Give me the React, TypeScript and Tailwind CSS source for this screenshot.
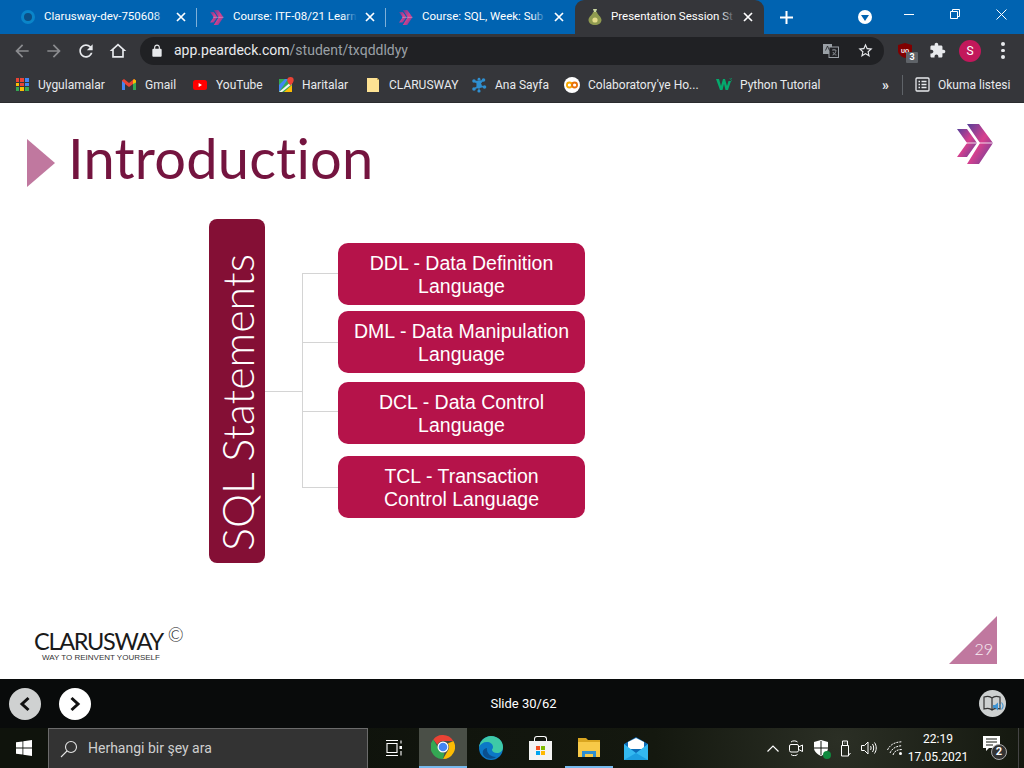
import type { ReactNode } from "react";

const ui = "font-['Roboto','Noto_Sans',sans-serif]";

function Chevrons({ size = 16 }: { size?: number }) {
  return (
    <svg width={size * 0.9} height={size} viewBox="0 0 36 40">
      <defs>
        <linearGradient id="chev" x1="0" y1="0" x2="1" y2="1">
          <stop offset="0" stopColor="#57409a" />
          <stop offset="0.5" stopColor="#d8408e" />
          <stop offset="1" stopColor="#57409a" />
        </linearGradient>
      </defs>
      <polygon points="0,5 10,5 20,19 10,33 0,33 10,19" fill="url(#chev)" />
      <polygon points="10,0 22,0 36,19 22,40 10,40 23,19" fill="url(#chev)" />
      <rect x="8" y="18.500" width="28" height="1" fill="#fff" opacity="0.8" />
    </svg>
  );
}

function Mat({ d, size = 20, className = "" }: { d: string; size?: number; className?: string }) {
  return (
    <svg width={size} height={size} viewBox="0 0 24 24" fill="currentColor" className={className}>
      <path d={d} />
    </svg>
  );
}

function CloseX() {
  return (
    <svg width="10" height="10" viewBox="0 0 10 10" stroke="#fff" strokeWidth="1.7" className="shrink-0">
      <path d="M1 1l8 8M9 1l-8 8" />
    </svg>
  );
}

function Tab({ icon, title, active, divider }: { icon: ReactNode; title: string; active?: boolean; divider?: boolean }) {
  return (
    <div className={`relative w-[189px] h-[34px] shrink-0 flex items-center pl-[12px] pr-[10px] ${active ? "bg-[#35363a] rounded-t-[9px]" : ""}`}>
      <div className="w-[16px] h-[16px] mr-[8px] flex items-center justify-center shrink-0">{icon}</div>
      <div className="relative flex-1 overflow-hidden whitespace-nowrap text-[11.500px] text-white">
        {title}
        <div className={`absolute right-0 top-0 bottom-0 w-[14px] bg-linear-to-r from-transparent ${active ? "to-[#35363a]" : "to-[#0063b1]"}`} />
      </div>
      <div className="w-[12px] ml-[7px] flex justify-center"><CloseX /></div>
      {divider && <div className="absolute right-0 top-[8px] h-[19px] w-px bg-[#7fb0d8]" />}
    </div>
  );
}

function Bookmark({ icon, label, width }: { icon: ReactNode; label: string; width: number }) {
  return (
    <div className="flex items-center shrink-0" style={{ width }}>
      <div className="w-[16px] h-[16px] flex items-center justify-center mr-[8px] shrink-0">{icon}</div>
      <span className="text-[12px] text-[#e8eaed] whitespace-nowrap">{label}</span>
    </div>
  );
}

function AppsIcon() {
  const colors = ["#ea4335", "#ea4335", "#4285f4", "#fbbc04", "#ea4335", "#4285f4", "#34a853", "#fbbc04", "#34a853"];
  return (
    <div className="grid grid-cols-3 gap-[1px] w-[13px] h-[13px]">
      {colors.map((c, i) => <div key={i} style={{ backgroundColor: c }} />)}
    </div>
  );
}

function GmailIcon() {
  return (
    <svg width="14" height="11" viewBox="0 0 14 11">
      <path d="M0 1.500V11h3V5l4 3 4-3v6h3V1.500L12 0 7 4 2 0z" fill="#ea4335" />
      <path d="M0 2v9h3V4.500z" fill="#4285f4" />
      <path d="M14 2v9h-3V4.500z" fill="#34a853" />
      <path d="M11 1.500L12 0l2 1.500v2L11 5z" fill="#fbbc04" />
    </svg>
  );
}

function YoutubeIcon() {
  return (
    <svg width="14" height="10" viewBox="0 0 14 10">
      <rect width="14" height="10" rx="2.500" fill="#f00" />
      <path d="M5.600 3v4l3.400-2z" fill="#fff" />
    </svg>
  );
}

function MapsIcon() {
  return (
    <svg width="15" height="15" viewBox="0 0 15 15">
      <rect y="2" width="13" height="13" fill="#34a853" />
      <path d="M0 15V8l6-6h3z" fill="#4285f4" />
      <path d="M0 15L13 4v3L3 15z" fill="#f1f3f4" />
      <path d="M5 15l8-7v7z" fill="#fbbc04" />
      <path d="M0 2h5L0 7z" fill="#34a853" />
      <path d="M11.500 0a3.200 3.200 0 00-3.200 3.200c0 2.200 3.200 5.300 3.200 5.300s3.200-3.100 3.200-5.300A3.200 3.200 0 0011.500 0z" fill="#ea4335" />
    </svg>
  );
}

function AnaSayfaIcon() {
  return (
    <svg width="16" height="16" viewBox="0 0 16 16" fill="#2f8fd0">
      <circle cx="8" cy="8" r="2.600" />
      <circle cx="3" cy="4" r="1.800" /><circle cx="12.500" cy="3" r="1.800" /><circle cx="13.500" cy="10" r="1.800" />
      <circle cx="3" cy="12" r="1.800" /><circle cx="8" cy="14" r="1.600" /><circle cx="8" cy="2.200" r="1.400" />
      <path d="M3 4l5 4 4.500-5M3 12l5-4 5.500 2M8 8v6" stroke="#2f8fd0" strokeWidth="1" />
    </svg>
  );
}

function ColabIcon() {
  return (
    <svg width="16" height="16" viewBox="0 0 16 16">
      <circle cx="8" cy="8" r="8" fill="#fff" />
      <circle cx="5.400" cy="8" r="2.500" fill="none" stroke="#f9ab00" strokeWidth="1.800" />
      <circle cx="10.600" cy="8" r="2.500" fill="none" stroke="#e8710a" strokeWidth="1.800" />
    </svg>
  );
}

function W3Icon() {
  return (
    <svg width="16" height="13" viewBox="0 0 16 13">
      <path d="M0 1h3l2 7 2-7h2l2 7 1.500-5h2.500l-3 9h-2.500L8 6l-1.500 6H4z" fill="#04aa6d" />
      <path d="M13 0h2.500v.5L14.500 1.500c.7 0 1 .4 1 1s-.5 1-1.200 1H13" stroke="#04aa6d" strokeWidth="0.600" fill="none" />
    </svg>
  );
}

function PearIcon() {
  return (
    <svg width="14" height="16" viewBox="0 0 14 16">
      <path d="M5 0h4l-1 3h-2z" fill="#c9d6a0" />
      <path d="M5 3h4c0 2.500 4.500 4.500 4.500 8 0 3-3 5-6.500 5S.5 14 .5 11c0-3.500 4.500-5.500 4.500-8z" fill="#8f9a50" />
      <circle cx="7" cy="11" r="2.600" fill="#e4dc8a" />
    </svg>
  );
}

function FolderBookmark() {
  return (
    <svg width="12" height="14" viewBox="0 0 12 14">
      <path d="M0 0h10l2 2v12H0z" fill="#fde293" />
      <path d="M10 0v2h2" fill="#c9a94f" />
    </svg>
  );
}

function BrowserChrome() {
  return (
    <div className={`${ui} shrink-0`}>
      <div className="h-[34px] bg-[#0063b1] flex items-center">
        <div className="w-[8px] shrink-0" />
        <Tab divider title="Clarusway-dev-750608" icon={
          <div className="w-[14px] h-[14px] rounded-full border-[3px] border-[#0a85c9] bg-[#0b4f86]" />
        } />
        <Tab divider title="Course: ITF-08/21 Learn" icon={<Chevrons size={15} />} />
        <Tab title="Course: SQL, Week: Sub" icon={<Chevrons size={15} />} />
        <Tab active title="Presentation Session St" icon={<PearIcon />} />
        <div className="w-[44px] flex justify-center">
          <svg width="13" height="13" viewBox="0 0 13 13" stroke="#fff" strokeWidth="2"><path d="M6.500 0v13M0 6.500h13" /></svg>
        </div>
        <div className="flex-1 flex items-center pl-[50px] self-stretch">
          <div className="w-[14px] h-[14px] rounded-full bg-white flex items-center justify-center">
            <div className="w-0 h-0 border-x-[4px] border-x-transparent border-t-[6px] border-t-[#0063b1] mt-[1px]" />
          </div>
          <div className="ml-[32px] w-[10px] h-px bg-white -mt-[6px]" />
          <svg width="10" height="10" viewBox="0 0 10 10" fill="none" stroke="#fff" className="ml-[36px] -mt-[6px]">
            <path d="M.5 2.500h7v7h-7zM2.500 2.500v-2h7v7h-2" />
          </svg>
          <svg width="11" height="11" viewBox="0 0 11 11" stroke="#fff" className="ml-[36px] -mt-[6px]">
            <path d="M.5.5l10 10M10.500.5l-10 10" />
          </svg>
        </div>
      </div>

      <div className="h-[33px] bg-[#35363a] flex items-center pl-[12px] pr-[12px]">
        <Mat size={20} className="text-[#8b8c8f] w-[20px]" d="M20 11H7.830l5.590-5.590L12 4l-8 8 8 8 1.410-1.410L7.830 13H20v-2z" />
        <Mat size={20} className="text-[#8b8c8f] ml-[12px]" d="M12 4l-1.410 1.410L16.170 11H4v2h12.170l-5.580 5.590L12 20l8-8z" />
        <Mat size={20} className="text-[#e8eaed] ml-[12px]" d="M17.650 6.350C16.200 4.900 14.210 4 12 4c-4.420 0-7.990 3.580-7.990 8s3.570 8 7.990 8c3.730 0 6.840-2.550 7.730-6h-2.080c-.82 2.330-3.040 4-5.650 4-3.310 0-6-2.690-6-6s2.690-6 6-6c1.660 0 3.140.69 4.220 1.780L13 11h7V4l-2.350 2.350z" />
        <Mat size={20} className="text-[#e8eaed] ml-[12px]" d="M12 5.690l5 4.500V18H7v-7.810l5-4.500M12 3L2 12h3v8h14v-8h3L12 3z" />
        <div className="ml-[12px] h-[28px] w-[744px] rounded-full bg-[#202124] flex items-center pl-[10px] pr-[10px]">
          <Mat size={14} className="text-[#e8eaed]" d="M18 8h-1V6c0-2.760-2.240-5-5-5S7 3.240 7 6v2H6c-1.100 0-2 .9-2 2v10c0 1.100.9 2 2 2h12c1.100 0 2-.9 2-2V10c0-1.100-.9-2-2-2zM9 6c0-1.660 1.340-3 3-3s3 1.340 3 3v2H9V6z" />
          <span className="ml-[10px] text-[14px] text-[#e8eaed]">app.peardeck.com<span className="text-[#9aa0a6]">/student/txqddldyy</span></span>
          <div className="flex-1" />
          <svg width="16" height="14" viewBox="0 0 16 14" className="mr-[18px]">
            <rect x="0" y="0" width="9" height="10" fill="#9aa0a6" />
            <rect x="6" y="3" width="9.500" height="10.500" fill="#202124" stroke="#9aa0a6" />
            <path d="M2.500 6.500L4.500 2l2 4.500" stroke="#202124" strokeWidth="0.800" fill="none" />
            <path d="M9 6h4M11 5v1M9.500 11c2 0 3.500-3 3.500-5M10 8c.5 1.500 2 3 3.500 3" stroke="#9aa0a6" strokeWidth="0.800" fill="none" />
          </svg>
          <Mat size={17} className="text-[#e8eaed]" d="M22 9.240l-7.190-.62L12 2 9.190 8.630 2 9.240l5.460 4.730L5.820 21 12 17.270 18.180 21l-1.630-7.030L22 9.240zM12 15.400l-3.760 2.270 1-4.280-3.320-2.880 4.380-.38L12 6.100l1.710 4.040 4.380.38-3.320 2.880 1 4.280L12 15.400z" />
        </div>
        <div className="relative ml-[13px] w-[16px] h-[16px] flex items-center justify-center">
          <svg width="14" height="15" viewBox="0 0 14 15"><path d="M7 0l7 2v6c0 3-3 5.500-7 7-4-1.500-7-4-7-7V2z" fill="#800000" /></svg>
          <span className="absolute inset-0 flex items-center justify-center text-[6px] font-bold text-white">UO</span>
          <span className="absolute left-[9px] top-[9px] w-[12px] h-[11px] rounded-[1px] bg-[#5f6368] text-white text-[9px] font-bold leading-[11px] text-center">3</span>
        </div>
        <Mat size={17} className="text-[#e8eaed] ml-[16px]" d="M20.500 11H19V7c0-1.100-.9-2-2-2h-4V3.500C13 2.120 11.880 1 10.500 1S8 2.120 8 3.500V5H4c-1.100 0-1.990.9-1.990 2v3.800H3.500c1.490 0 2.700 1.210 2.700 2.700s-1.210 2.700-2.700 2.700H2V20c0 1.100.9 2 2 2h3.800v-1.500c0-1.490 1.210-2.700 2.700-2.700 1.490 0 2.700 1.210 2.700 2.700V22H17c1.100 0 2-.9 2-2v-4h1.500c1.380 0 2.500-1.120 2.500-2.500S21.880 11 20.500 11z" />
        <div className="ml-[13px] w-[22px] h-[22px] rounded-full bg-[#c2185b] text-white text-[12px] flex items-center justify-center">S</div>
        <div className="ml-[20px] flex flex-col gap-[3px]">
          <div className="w-[3.500px] h-[3.500px] rounded-full bg-[#e8eaed]" />
          <div className="w-[3.500px] h-[3.500px] rounded-full bg-[#e8eaed]" />
          <div className="w-[3.500px] h-[3.500px] rounded-full bg-[#e8eaed]" />
        </div>
      </div>

      <div className="h-[36px] bg-[#35363a] border-b border-[#2a2b2e] flex items-center pl-[14px]">
        <Bookmark width={107} icon={<AppsIcon />} label="Uygulamalar" />
        <Bookmark width={71} icon={<GmailIcon />} label="Gmail" />
        <Bookmark width={86} icon={<YoutubeIcon />} label="YouTube" />
        <Bookmark width={87} icon={<MapsIcon />} label="Haritalar" />
        <Bookmark width={106} icon={<FolderBookmark />} label="CLARUSWAY" />
        <Bookmark width={93} icon={<AnaSayfaIcon />} label="Ana Sayfa" />
        <Bookmark width={152} icon={<ColabIcon />} label="Colaboratory'ye Ho..." />
        <Bookmark width={166} icon={<W3Icon />} label="Python Tutorial" />
        <span className="text-[#e8eaed] text-[14px] leading-none w-[20px] font-bold">»</span>
        <div className="w-px h-[20px] bg-[#5f6368] mr-[12px]" />
        <svg width="15" height="15" viewBox="0 0 15 15" fill="none" stroke="#e8eaed" strokeWidth="1.300" className="mr-[8px]">
          <rect x="1" y="1" width="13" height="13" rx="1" />
          <path d="M3.500 4.500h1.500M3.500 7.500h1.500M3.500 10.500h1.500M6.500 4.500h5M6.500 7.500h5M6.500 10.500h5" />
        </svg>
        <span className="text-[12px] text-[#e8eaed] whitespace-nowrap">Okuma listesi</span>
      </div>
    </div>
  );
}

const statements = [
  { lines: ["DDL - Data Definition", "Language"], mt: "mt-[24px]" },
  { lines: ["DML - Data Manipulation", "Language"], mt: "mt-[6px]" },
  { lines: ["DCL - Data Control", "Language"], mt: "mt-[9px]" },
  { lines: ["TCL - Transaction", "Control Language"], mt: "mt-[12px]" },
];

function Diagram() {
  return (
    <div className="flex ml-[209px] font-['Liberation_Sans',Arial,sans-serif]">
      <div className="w-[56px] h-[344px] rounded-[8px] bg-[#840f35] flex items-center justify-center">
        <span className="[writing-mode:vertical-rl] rotate-180 mt-[24px] text-white text-[43px] leading-none font-['Lato',sans-serif] font-light whitespace-nowrap">
          SQL Statements
        </span>
      </div>
      <svg width="73" height="344" viewBox="0 0 73 344" fill="none" stroke="#d4d4d4" strokeWidth="1" className="shrink-0">
        <path d="M0 172.500h37M37.500 54v214M37 54.500h36M37 123.500h36M37 192.500h36M37 268.500h36" />
      </svg>
      <div className="flex flex-col">
        {statements.map((s) => (
          <div key={s.lines[0]} className={`${s.mt} w-[247px] h-[62px] pt-[1px] rounded-[10px] bg-[#b5134a] flex flex-col items-center justify-center text-white text-[19.500px] leading-[23px]`}>
            {s.lines.map((l) => <div key={l} className="whitespace-nowrap">{l}</div>)}
          </div>
        ))}
      </div>
    </div>
  );
}

function Slide() {
  return (
    <div className="h-[576px] bg-white flex flex-col shrink-0">
      <div className="flex items-start pl-[27px] pr-[31px] pt-[21px] h-[116px]">
        <div className="w-0 h-0 mt-[15px] border-y-[24.500px] border-y-transparent border-l-[28px] border-l-[#c0789f]" />
        <h1 className="ml-[13px] text-[#74143f] text-[56px] leading-[68px] font-normal font-['Lato',sans-serif] tracking-[0.2px]">Introduction</h1>
        <div className="flex-1" />
        <Chevrons size={40} />
      </div>
      <Diagram />
      <div className="flex items-end justify-between pl-[34px] pr-[27px] mt-[53px]">
        <div className="text-[#1a1a1a] pb-[16px]">
          <div className="text-[23.500px] leading-[24px] tracking-[-1.300px] font-['Lato',sans-serif] font-normal flex">
            CLARUSWAY<span className="text-[19px] leading-[18px] ml-[5px] -mt-[3px] font-light">©</span>
          </div>
          <div className="text-[8px] leading-[10px] pl-[8px] whitespace-nowrap text-[#333] font-['Liberation_Sans',sans-serif]">WAY TO REINVENT YOURSELF</div>
        </div>
        <div className="relative w-[48px] h-[48px] mb-[15px] bg-[#c0789f] [clip-path:polygon(100%_0,100%_100%,0_100%)]">
          <span className="absolute right-[4px] bottom-[6px] text-[16px] leading-[18px] text-white/90 font-['Lato',sans-serif] font-light">29</span>
        </div>
      </div>
    </div>
  );
}

function DeckBar() {
  return (
    <div className={`${ui} h-[49px] bg-[#090b0b] flex items-center shrink-0 pl-[9px] pr-[18px]`}>
      <div className="w-[32px] h-[32px] rounded-full bg-[#cfd1d1] flex items-center justify-center">
        <svg width="12" height="16" viewBox="0 0 12 16" fill="none" stroke="#111" strokeWidth="3"><path d="M9.500 2L3 8l6.500 6" /></svg>
      </div>
      <div className="ml-[18px] w-[32px] h-[32px] rounded-full bg-white flex items-center justify-center">
        <svg width="12" height="16" viewBox="0 0 12 16" fill="none" stroke="#111" strokeWidth="3"><path d="M2.500 2L9 8l-6.500 6" /></svg>
      </div>
      <div className="flex-1 text-center text-white text-[13px] pr-[23px]">Slide 30/62</div>
      <div className="w-[27px] h-[27px] rounded-full bg-[#cdd0d0] flex items-center justify-center">
        <svg width="22" height="20" viewBox="0 0 22 20" fill="none">
          <path d="M2 3c3-1 6-1 8 1 2-2 5-2 8-1v12c-3-1-6-1-8 1-2-2-5-2-8-1zM10 4v12" stroke="#333" strokeWidth="1.200" />
          <path d="M11 11h2l3-2.500v8L13 14h-2z" fill="#3f93d2" />
          <path d="M17.500 10c1 1 1 3 0 4M19.500 8.500c1.800 2 1.800 5 0 7" stroke="#3f93d2" strokeWidth="1.100" />
        </svg>
      </div>
    </div>
  );
}

function Taskbar() {
  return (
    <div className={`${ui} h-[40px] flex items-stretch shrink-0 bg-[#12160f] bg-[radial-gradient(circle_at_82%_30%,#2b2f25_0,#14180f_22%,#0f130c_60%)]`}>
      <div className="w-[48px] flex items-center justify-center">
        <svg width="16" height="16" viewBox="0 0 16 16" fill="#fff">
          <path d="M0 2.300L6.500 1.400v6.200H0zM7.300 1.300L16 0v7.600H7.300zM0 8.400h6.500v6.200L0 13.700zM7.300 8.400H16V16l-8.700-1.300z" />
        </svg>
      </div>
      <div className="w-[320px] bg-[#333] border border-b-0 border-[#6b6b6b] flex items-center pl-[11px]">
        <svg width="18" height="18" viewBox="0 0 18 18" fill="none" stroke="#e5e5e5" strokeWidth="1.100">
          <circle cx="11" cy="7" r="5.500" /><path d="M7 11l-6 6" />
        </svg>
        <span className="ml-[10px] text-[14px] text-[#cfcfcf]">Herhangi bir şey ara</span>
      </div>
      <div className="w-[51px] flex items-center justify-center">
        <svg width="16" height="16" viewBox="0 0 16 16" fill="none" stroke="#fff" strokeWidth="1.100">
          <path d="M0 .5h12M0 15.500h12M1 3.500h10v9H1zM15 .5v3M15 11v4.500" />
          <rect x="13.500" y="6" width="3" height="3" fill="#fff" stroke="none" />
        </svg>
      </div>
      <div className="w-[48px] bg-[#4a4f47] border-b-2 border-[#76b9ed] flex items-center justify-center">
        <svg width="24" height="24" viewBox="0 0 24 24">
          <path d="M12 0a12 12 0 0110.400 6H12a6 6 0 00-5.600 3.800L2.300 4.400A12 12 0 0112 0z" fill="#ea4335" />
          <path d="M22.400 6A12 12 0 0112 24l5.200-9A6 6 0 0016.800 8.500z" fill="#fbbc04" />
          <path d="M12 24A12 12 0 012.300 4.400L7 12.500A6 6 0 0013.500 17.800z" fill="#34a853" />
          <circle cx="12" cy="12" r="5.500" fill="#fff" />
          <circle cx="12" cy="12" r="4.300" fill="#4285f4" />
        </svg>
      </div>
      <div className="w-[48px] flex items-center justify-center">
        <svg width="24" height="24" viewBox="0 0 24 24">
          <circle cx="12" cy="12" r="12" fill="#0c78c6" />
          <path d="M12 0c7 0 12 5 12 11 0 4-3 6-6 6-3 0-5-1.500-5-3 0-1 1-1.500 1-3 0-3-3-5-6-5C4 6 1.500 8 0 11 1 5 6 0 12 0z" fill="#3ec9a7" />
          <path d="M8 12c-1 5 4 9 9 9-2 2-8 3-12-1-2-3-2-7 3-8z" fill="#0a4f8f" />
        </svg>
      </div>
      <div className="w-[50px] flex items-center justify-center">
        <div className="relative w-[23px] h-[24px]">
          <div className="absolute left-[5px] top-0 w-[13px] h-[8px] border border-white border-b-0 rounded-t-[3px]" />
          <div className="absolute left-0 bottom-0 w-[23px] h-[19px] bg-[#f3f3f3] flex items-center justify-center">
            <div className="grid grid-cols-2 gap-[1px] w-[9px] h-[9px]">
              <div className="bg-[#f25022]" /><div className="bg-[#7fba00]" /><div className="bg-[#00a4ef]" /><div className="bg-[#ffb900]" />
            </div>
          </div>
        </div>
      </div>
      <div className="w-[48px] border-b-2 border-[#76b9ed] flex items-center justify-center">
        <svg width="22" height="19" viewBox="0 0 22 19">
          <path d="M0 0h8l2 2h12v4H0z" fill="#d9a520" />
          <path d="M0 4h22v15H0z" fill="#f7c948" />
          <path d="M4 13h14v6h-3v-3H7v3H4z" fill="#2f8fd0" />
        </svg>
      </div>
      <div className="w-[46px] flex items-center justify-center">
        <svg width="24" height="23" viewBox="0 0 24 23">
          <path d="M12 0l12 7v16H0V7z" fill="#0c6cb8" />
          <path d="M4 5l8-4 8 4v7H4z" fill="#fff" />
          <path d="M0 7l12 9 12-9v16H0z" fill="#33b8f0" />
          <path d="M0 23l12-7 12 7z" fill="#1c9ee0" />
        </svg>
      </div>

      <div className="flex-1" />

      <div className="flex items-center text-white pr-[1px]">
        <svg width="12" height="7" viewBox="0 0 12 7" fill="none" stroke="#fff" strokeWidth="1.200"><path d="M.5 6.500L6 1l5.500 5.500" /></svg>
        <svg width="14" height="16" viewBox="0 0 14 16" fill="none" stroke="#fff" className="ml-[10px]">
          <rect x=".5" y="4.500" width="9" height="7.500" rx="1.500" /><path d="M9.500 7l4-2v6.500l-4-2M2 2c1.500-1.500 5-1.500 6.500 0M2 14.500c1.500 1.500 5 1.500 6.500 0" />
        </svg>
        <div className="relative ml-[11px] w-[15px] h-[17px]">
          <svg width="14" height="16" viewBox="0 0 14 16"><path d="M7 0l7 2v6c0 3.500-3 6-7 8-4-2-7-4.500-7-8V2z" fill="#fff" /><path d="M6.500 1v6.500H0v1h6.500V15h1V8.500H14v-1H7.500V1z" fill="#12160f" /></svg>
          <div className="absolute right-[-2px] bottom-[-2px] w-[8px] h-[8px] rounded-full bg-[#10893e]" />
        </div>
        <svg width="12" height="17" viewBox="0 0 12 17" fill="none" stroke="#fff" className="ml-[10px]">
          <path d="M2.500 5.500h7V16h-7zM3.500 5.500V1h5v4.500" /><path d="M5 3h.5M6.800 3h.5" /><path d="M9 16l2.500-3" />
        </svg>
        <svg width="17" height="14" viewBox="0 0 17 14" fill="none" stroke="#fff" className="ml-[10px]">
          <path d="M.5 4.500h3L7 1v12L3.500 9.500h-3zM9.500 5c.8 1 .8 3 0 4M11.500 3c1.600 2.300 1.600 5.700 0 8M13.500 1.500c2.300 3.300 2.300 7.700 0 11" />
        </svg>
        <svg width="16" height="15" viewBox="0 0 16 15" fill="none" stroke="#fff" className="ml-[9px]">
          <path d="M.5 9C3 3.500 8 1 15 .8M3 12c2-4.500 6-7 12-7.300M6 14c1-3.500 4-5.500 9-5.500" strokeDasharray="2 1" />
          <circle cx="13.500" cy="12.500" r="1.500" fill="#fff" stroke="none" />
        </svg>
        <div className="w-[68px] ml-[1px] text-center text-[12px] leading-[18px] text-white">
          <div>22:19</div>
          <div>17.05.2021</div>
        </div>
        <div className="relative w-[40px] ml-[6px] h-[24px] flex items-start pl-[5px]">
          <svg width="17" height="16" viewBox="0 0 17 16" fill="#fff"><path d="M0 0h17v12H6l-3 3v-3H0z" /><path d="M3 3h11M3 6h11M3 9h7" stroke="#12160f" /></svg>
          <div className="absolute left-[13px] top-[8px] w-[16px] h-[16px] rounded-full bg-[#333] border border-[#aaa] text-white text-[11px] font-bold leading-[14px] text-center">2</div>
        </div>
        <div className="w-px h-full bg-[#444]" />
        <div className="w-[4px]" />
      </div>
    </div>
  );
}

export default function App() {
  return (
    <div className="w-[1024px] h-[768px] overflow-hidden flex flex-col">
      <BrowserChrome />
      <Slide />
      <DeckBar />
      <Taskbar />
    </div>
  );
}
